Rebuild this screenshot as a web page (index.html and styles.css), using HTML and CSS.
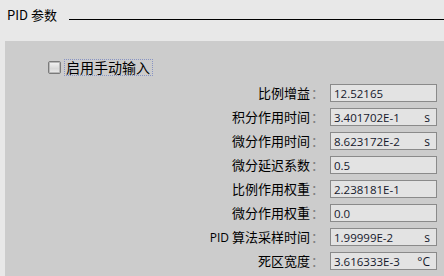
FILE: index.html
```html
<!DOCTYPE html>
<html lang="zh-CN">
<head>
    <meta charset="UTF-8">
    <title>PID 参数</title>
    <link rel="stylesheet" href="styles.css">
</head>
<body>
    <div class="header">
        <span class="title">PID 参数</span>
        <span class="rule"></span>
    </div>

    <div class="panel">
        <label class="check">
            <span class="box"></span>
            <span class="check-text">启用手动输入</span>
        </label>

        <div class="params">
            <div class="name">比例增益<span class="colon">：</span></div>
            <div class="field"><span>12.52165</span></div>

            <div class="name">积分作用时间<span class="colon">：</span></div>
            <div class="field"><span>3.401702E-1</span><span class="unit">s</span></div>

            <div class="name">微分作用时间<span class="colon">：</span></div>
            <div class="field"><span>8.623172E-2</span><span class="unit">s</span></div>

            <div class="name">微分延迟系数<span class="colon">：</span></div>
            <div class="field"><span>0.5</span></div>

            <div class="name">比例作用权重<span class="colon">：</span></div>
            <div class="field"><span>2.238181E-1</span></div>

            <div class="name">微分作用权重<span class="colon">：</span></div>
            <div class="field"><span>0.0</span></div>

            <div class="name"><span class="latin">PID</span> 算法采样时间<span class="colon">：</span></div>
            <div class="field"><span>1.99999E-2</span><span class="unit">s</span></div>

            <div class="name">死区宽度<span class="colon">：</span></div>
            <div class="field"><span>3.616333E-3</span><span class="unit">°C</span></div>
        </div>
    </div>
</body>
</html>
```

FILE: styles.css
```css
html, body {
    margin: 0;
    height: 100%;
}
body {
    background: #e8e8e8;
    font-family: "Noto Sans CJK SC", "Noto Sans", sans-serif;
    font-size: 13px;
    color: #000;
    overflow: hidden;
}
.header {
    display: flex;
    align-items: center;
    height: 28px;
    padding-left: 7px;
    margin-bottom: 13px;
}
.title {
    font-size: 13px;
    line-height: 16px;
    padding-top: 1px;
}
.rule {
    flex: 1;
    border-top: 1px solid #000;
    margin-left: 12px;
    margin-top: 10px;
}
.panel {
    margin-left: 5px;
    background: #cccccc;
    height: 235px;
    padding: 18px 7px 0 0;
    box-sizing: border-box;
}
.check {
    display: flex;
    align-items: center;
    margin-left: 43px;
    height: 17px;
}
.box {
    width: 11px;
    height: 11px;
    border: 1px solid #7a7a7a;
    border-radius: 2px;
    background: linear-gradient(#f4f4f4, #d8d8d8 60%, #ececec);
    box-shadow: inset 0 0 0 1px #b8b8b8;
}
.check-text {
    margin-left: 3px;
    padding: 0 2px 0 1px;
    height: 15px;
    line-height: 15px;
    border: 1px dotted #8894c4;
    font-size: 14px;
}
.params {
    display: grid;
    grid-template-columns: 1fr 107px;
    grid-auto-rows: 18px;
    row-gap: 6px;
    column-gap: 6px;
    margin-top: 8px;
}
.name {
    text-align: right;
    line-height: 18px;
    font-size: 13px;
    white-space: nowrap;
}
.latin {
    font-family: "Open Sans", sans-serif;
    font-size: 12px;
}
.colon {
    color: #808080;
    display: inline-block;
    width: 13px;
    text-align: left;
    margin-left: 1px;
}
.field {
    display: flex;
    justify-content: space-between;
    align-items: center;
    border: 1px solid #8a8a8a;
    background: #e3e3e3;
    padding: 0 6px 0 3px;
    font-family: "Open Sans", sans-serif;
    font-size: 11.5px;
    color: #15182c;
}
.unit {
    font-size: 12px;
}
```
